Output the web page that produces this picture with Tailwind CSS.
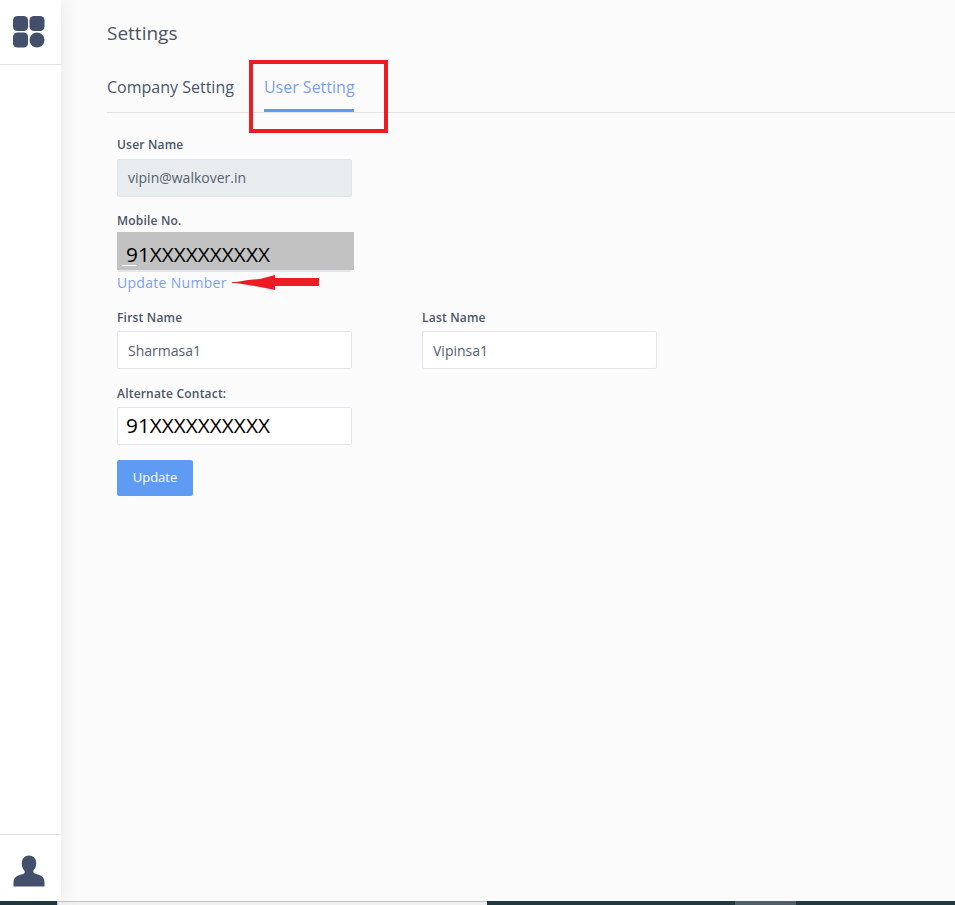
<!DOCTYPE html>
<html>
<head>
<meta charset="utf-8">
<script src="https://cdn.jsdelivr.net/npm/@tailwindcss/browser@4"></script>
</head>
<body class="m-0 overflow-hidden bg-[#fbfbfb] font-['Open_Sans',sans-serif]">
<div class="relative flex h-[905px] w-[955px] flex-col overflow-hidden">
  <div class="flex h-[901px] min-h-0">
    <aside class="z-10 flex w-[61px] shrink-0 flex-col justify-between bg-white shadow-[3px_0_18px_rgba(0,0,0,0.07)]">
      <div class="flex h-[65px] items-start border-b border-[#e4e4e8] pl-[13px] pt-[16px]">
        <svg width="32" height="32" viewBox="0 0 33 33" fill="#44506b"><rect x="0" y="0" width="15.5" height="15.5" rx="4.5"/><rect x="17" y="0" width="15.5" height="15.5" rx="4.5"/><rect x="0" y="17" width="15.5" height="15.5" rx="4.5"/><circle cx="24.75" cy="24.75" r="7.75"/></svg>
      </div>
      <div class="flex h-[67px] items-start border-t border-[#e4e4e8] pl-[13px] pt-[20px]">
        <svg width="32" height="32" viewBox="0 0 33 32" fill="#44506b"><path d="M16.5 0c4.200 0 7.500 3.200 7.500 7.800 0 3.200-1.200 6-3 7.700v1.600c0 .6.4 1 1 1.200l5 1.700c3.300 1.100 5.500 3.600 5.500 7V32H.5v-4.500c0-3.400 2.200-5.900 5.500-7l5-1.700c.6-.2 1-.6 1-1.200v-1.600c-1.800-1.700-3-4.500-3-7.700C9 3.200 12.300 0 16.500 0z"/></svg>
      </div>
    </aside>
    <main class="min-w-0 flex-1 pl-[46px]">
      <h1 class="pt-[20px] text-[19px] leading-[27px] font-normal text-[#4b5563]">Settings</h1>
      <nav class="mt-[14px] flex h-[52px] gap-[30px] border-b border-[#e2e2e8] text-[16px] leading-[22px]">
        <a class="pt-[15px] text-[#4a5568]">Company Setting</a>
        <a class="h-[51px] w-[90px] whitespace-nowrap border-b-[3px] border-[#5f9bf2] pt-[15px] text-[#7b9ff5]">User Setting</a>
      </nav>
      <form class="pl-[10px] pt-[24px]">
        <div class="w-[235px]">
          <label class="block text-[12px] leading-[16px] font-semibold tracking-[0.2px] text-[#4a5568]">User Name</label>
          <div class="mt-[6px] flex h-[38px] items-center rounded-[2px] border border-[#e2e5ea] bg-[#e9ecef] pb-[2px] pl-[10px] text-[14px] text-[#55606e]">vipin@walkover.in</div>
        </div>
        <div class="mt-[16px] w-[235px]">
          <label class="block text-[12px] leading-[16px] font-semibold tracking-[0.2px] text-[#4a5568]">Mobile No.</label>
          <div class="relative mt-[3px] h-[40px] rounded-[2px] border-b-2 border-[#e2e5ea]">
            <div class="flex h-[38px] w-[237px] items-center bg-[#c2c2c2] pl-[9px] pt-[8px] text-[20.8px] text-black">91XXXXXXXXXX</div>
            <span class="absolute left-[5px] top-[33px] h-px w-[15px] bg-white"></span>
          </div>
          <div class="relative flex h-[20px] w-[235px] items-center">
            <a class="text-[14px] tracking-[0.3px] text-[#7b9ff5]">Update Number</a>
            <svg class="absolute left-[115px] top-[2px]" width="88" height="17" viewBox="0 0 88 17" fill="#ed1c24"><path d="M0 8H4L16 6L28 5L43 1V4H87V12H43V16L28 13L16 11L4 9H0z"/></svg>
          </div>
        </div>
        <div class="mt-[18px] flex gap-[70px]">
          <div class="w-[235px]">
            <label class="block text-[12px] leading-[16px] font-semibold tracking-[0.2px] text-[#4a5568]">First Name</label>
            <div class="mt-[5px] flex h-[38px] items-center rounded-[2px] border border-[#e2e5ea] bg-white pl-[10px] text-[14px] text-[#55606e]">Sharmasa1</div>
          </div>
          <div class="w-[235px]">
            <label class="block text-[12px] leading-[16px] font-semibold tracking-[0.2px] text-[#4a5568]">Last Name</label>
            <div class="mt-[5px] flex h-[38px] items-center rounded-[2px] border border-[#e2e5ea] bg-white pl-[10px] text-[14px] text-[#55606e]">Vipinsa1</div>
          </div>
        </div>
        <div class="mt-[17px] w-[235px]">
          <label class="block text-[12px] leading-[16px] font-semibold tracking-[0.2px] text-[#4a5568]">Alternate Contact:</label>
          <div class="mt-[5px] flex h-[38px] items-center rounded-[2px] border border-[#e2e5ea] bg-white pl-[8px] text-[20.8px] text-black">91XXXXXXXXXX</div>
        </div>
        <button type="button" class="mt-[15px] h-[36px] w-[76px] rounded-[2px] bg-[#5f9bf2] text-center text-[13px] text-white">Update</button>
      </form>
    </main>
  </div>
  <div class="flex h-[4px] shrink-0 bg-[#22383f]">
    <div class="ml-[57px] h-[4px] w-[430px] border-t border-l border-[#c4c4c4] bg-[#f1f1f1]"></div>
    <div class="ml-[248px] h-[4px] w-[61px] bg-[#4f5f67]"></div>
  </div>
  <div class="absolute left-[249px] top-[60px] h-[73px] w-[139px] border-[4px] border-[#ed1c24]"></div>
</div>
</body>
</html>
